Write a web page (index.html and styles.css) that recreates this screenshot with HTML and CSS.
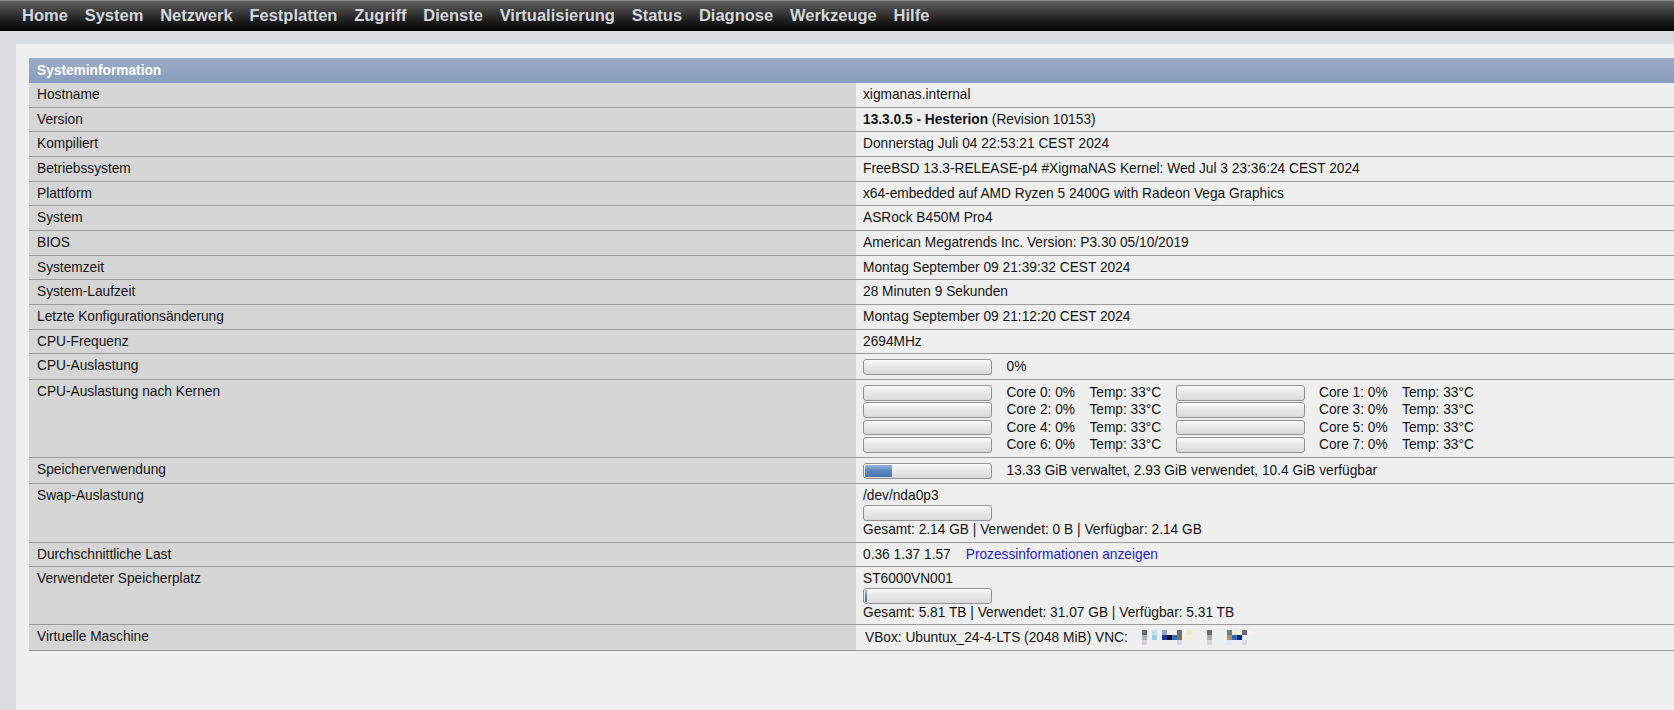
FILE: index.html
```html
<!DOCTYPE html>
<html lang="de">
<head>
<meta charset="utf-8">
<title>XigmaNAS - Systeminformation</title>
<link rel="stylesheet" href="styles.css">
</head>
<body>
<nav class="topnav">
  <a href="#">Home</a>
  <a href="#">System</a>
  <a href="#">Netzwerk</a>
  <a href="#">Festplatten</a>
  <a href="#">Zugriff</a>
  <a href="#">Dienste</a>
  <a href="#">Virtualisierung</a>
  <a href="#">Status</a>
  <a href="#">Diagnose</a>
  <a href="#">Werkzeuge</a>
  <a href="#">Hilfe</a>
</nav>
<div class="page">
  <div class="panel">
    <table class="info">
      <colgroup><col class="col-label"><col class="col-value"></colgroup>
      <thead>
        <tr><th colspan="2">Systeminformation</th></tr>
      </thead>
      <tbody>
        <tr><td class="label">Hostname</td><td class="value">xigmanas.internal</td></tr>
        <tr><td class="label">Version</td><td class="value"><b>13.3.0.5 - Hesterion</b> (Revision 10153)</td></tr>
        <tr><td class="label">Kompiliert</td><td class="value">Donnerstag Juli 04 22:53:21 CEST 2024</td></tr>
        <tr><td class="label">Betriebssystem</td><td class="value">FreeBSD 13.3-RELEASE-p4 #XigmaNAS Kernel: Wed Jul 3 23:36:24 CEST 2024</td></tr>
        <tr><td class="label">Plattform</td><td class="value">x64-embedded auf AMD Ryzen 5 2400G with Radeon Vega Graphics</td></tr>
        <tr><td class="label">System</td><td class="value">ASRock B450M Pro4</td></tr>
        <tr><td class="label">BIOS</td><td class="value">American Megatrends Inc. Version: P3.30 05/10/2019</td></tr>
        <tr><td class="label">Systemzeit</td><td class="value">Montag September 09 21:39:32 CEST 2024</td></tr>
        <tr><td class="label">System-Laufzeit</td><td class="value">28 Minuten 9 Sekunden</td></tr>
        <tr><td class="label">Letzte Konfigurationsänderung</td><td class="value">Montag September 09 21:12:20 CEST 2024</td></tr>
        <tr><td class="label">CPU-Frequenz</td><td class="value">2694MHz</td></tr>
        <tr><td class="label">CPU-Auslastung</td><td class="value"><div class="barline"><span class="bar"></span><span>0%</span></div></td></tr>
        <tr><td class="label">CPU-Auslastung nach Kernen</td><td class="value">
          <div class="cores">
            <span class="bar"></span><span>Core 0: 0%</span><span>Temp: 33°C</span><span class="bar"></span><span>Core 1: 0%</span><span>Temp: 33°C</span>
            <span class="bar"></span><span>Core 2: 0%</span><span>Temp: 33°C</span><span class="bar"></span><span>Core 3: 0%</span><span>Temp: 33°C</span>
            <span class="bar"></span><span>Core 4: 0%</span><span>Temp: 33°C</span><span class="bar"></span><span>Core 5: 0%</span><span>Temp: 33°C</span>
            <span class="bar"></span><span>Core 6: 0%</span><span>Temp: 33°C</span><span class="bar"></span><span>Core 7: 0%</span><span>Temp: 33°C</span>
          </div>
        </td></tr>
        <tr><td class="label">Speicherverwendung</td><td class="value"><div class="barline"><span class="bar"><span class="fill fill-mem"></span></span><span>13.33 GiB verwaltet, 2.93 GiB verwendet, 10.4 GiB verfügbar</span></div></td></tr>
        <tr><td class="label">Swap-Auslastung</td><td class="value">
          <div>/dev/nda0p3</div>
          <span class="bar bar-block"></span>
          <div>Gesamt: 2.14 GB | Verwendet: 0 B | Verfügbar: 2.14 GB</div>
        </td></tr>
        <tr><td class="label">Durchschnittliche Last</td><td class="value"><span>0.36 1.37 1.57</span><a class="link" href="#">Prozessinformationen anzeigen</a></td></tr>
        <tr><td class="label">Verwendeter Speicherplatz</td><td class="value">
          <div>ST6000VN001</div>
          <span class="bar bar-block"><span class="fill fill-disk"></span></span>
          <div>Gesamt: 5.81 TB | Verwendet: 31.07 GB | Verfügbar: 5.31 TB</div>
        </td></tr>
        <tr><td class="label">Virtuelle Maschine</td><td class="value"><div class="vmline"><span>VBox: Ubuntux_24-4-LTS (2048 MiB) VNC:</span>
          <svg class="vnc" width="116" height="15" viewBox="0 0 116 15" aria-hidden="true">
            <rect x="0" y="0" width="5" height="5" fill="#6b6b73"/>
            <rect x="10" y="0" width="5" height="5" fill="#c2e1f1"/>
            <rect x="20" y="0" width="5" height="5" fill="#8ea4cb"/>
            <rect x="35" y="0" width="5" height="5" fill="#6b6b73"/>
            <rect x="45" y="0" width="5" height="5" fill="#f1e8c9"/>
            <rect x="65" y="0" width="5" height="5" fill="#6b6b73"/>
            <rect x="85" y="0" width="5" height="5" fill="#6b7886"/>
            <rect x="90" y="0" width="5" height="5" fill="#f1e9d3"/>
            <rect x="100" y="0" width="5" height="5" fill="#6b6b7a"/>
            <rect x="105" y="0" width="5" height="5" fill="#f3f3e6"/>
            <rect x="0" y="5" width="5" height="5" fill="#a9b1b8"/>
            <rect x="10" y="5" width="5" height="5" fill="#9bd1f0"/>
            <rect x="20" y="5" width="5" height="5" fill="#1b3b8a"/>
            <rect x="25" y="5" width="5" height="5" fill="#0b0b30"/>
            <rect x="30" y="5" width="5" height="5" fill="#2b71c0"/>
            <rect x="35" y="5" width="5" height="5" fill="#7a7060"/>
            <rect x="45" y="5" width="5" height="5" fill="#f1f0d9"/>
            <rect x="65" y="5" width="5" height="5" fill="#a9a9a9"/>
            <rect x="85" y="5" width="5" height="5" fill="#a99071"/>
            <rect x="90" y="5" width="5" height="5" fill="#2b6bb8"/>
            <rect x="95" y="5" width="5" height="5" fill="#0b2b80"/>
            <rect x="100" y="5" width="5" height="5" fill="#f1f1f8"/>
            <rect x="110" y="5" width="5" height="5" fill="#e4f0ec"/>
            <rect x="0" y="10" width="5" height="5" fill="#d9d1d9"/>
            <rect x="35" y="10" width="5" height="5" fill="#d9d9e1"/>
            <rect x="65" y="10" width="5" height="5" fill="#d9d9e1"/>
            <rect x="85" y="10" width="5" height="5" fill="#e1e9f1"/>
            <rect x="100" y="10" width="5" height="5" fill="#d9d9e9"/>
          </svg></div></td></tr>
      </tbody>
    </table>
  </div>
</div>
</body>
</html>
```
FILE: styles.css
```css
html, body {
  margin: 0;
  padding: 0;
  height: 100%;
  overflow: hidden;
}

body {
  font-family: "Liberation Sans", Arial, sans-serif;
  font-size: 13.72px;
  line-height: 15.67px;
  color: #141414;
  background: #d9dce1;
}

.topnav {
  box-sizing: border-box;
  height: 31px;
  display: flex;
  align-items: center;
  gap: 16.8px;
  padding-left: 22px;
  background: linear-gradient(#8a8a8a 0, #8a8a8a 1px, #626262 1px, #2a2a2a 55%, #000 100%);
}

.topnav a {
  color: #d3d6db;
  font-weight: bold;
  font-size: 16.5px;
  line-height: 31px;
  text-decoration: none;
}

.page {
  padding: 13px 0 0 16px;
  height: calc(100% - 44px);
}

.panel {
  background: #efefef;
  padding: 14px 0 0 13px;
  height: 100%;
}

.info {
  width: 100%;
  border-collapse: collapse;
  table-layout: fixed;
}

.col-label {
  width: 827px;
}

.info th {
  text-align: left;
  color: #fff;
  font-weight: bold;
  padding: 5px 8px 4.3px;
  background: linear-gradient(#9cadc6, #889dbd);
}

.info td {
  padding: 4px 8px;
  vertical-align: top;
  border-bottom: 1px solid #9b9b9b;
  white-space: nowrap;
}

.info td.label {
  background: #d6d6d6;
}

.info td.value {
  background: #efefef;
  padding-left: 7px;
}

.bar {
  display: inline-block;
  position: relative;
  box-sizing: border-box;
  width: 129px;
  height: 15.5px;
  border: 1px solid #939393;
  border-radius: 3px;
  background: linear-gradient(#fcfcfc, #ececec 35%, #e2e2e2 70%, #d9d9d9);
  overflow: hidden;
  vertical-align: middle;
}

.bar-block {
  display: block;
  margin: 1.3px 0 1.1px;
}

.fill {
  position: absolute;
  left: 1px;
  top: 1px;
  bottom: 1px;
  background: linear-gradient(#9ab6da, #5d88bf 45%, #4b78b1);
}

.fill-mem {
  width: 27px;
}

.fill-disk {
  width: 2px;
}

.barline {
  display: flex;
  align-items: center;
  gap: 14.5px;
  height: 16.8px;
}

.cores {
  display: grid;
  grid-template-columns: 129px auto auto 129px auto auto;
  grid-auto-rows: 17.33px;
  column-gap: 14.4px;
  justify-content: start;
  align-items: center;
}

.link {
  color: #1d1dcc;
  text-decoration: none;
  margin-left: 15px;
}

.vmline {
  display: flex;
  align-items: center;
  gap: 14px;
  padding-left: 2px;
  height: 16.5px;
}

.vnc {
  display: block;
}
```
